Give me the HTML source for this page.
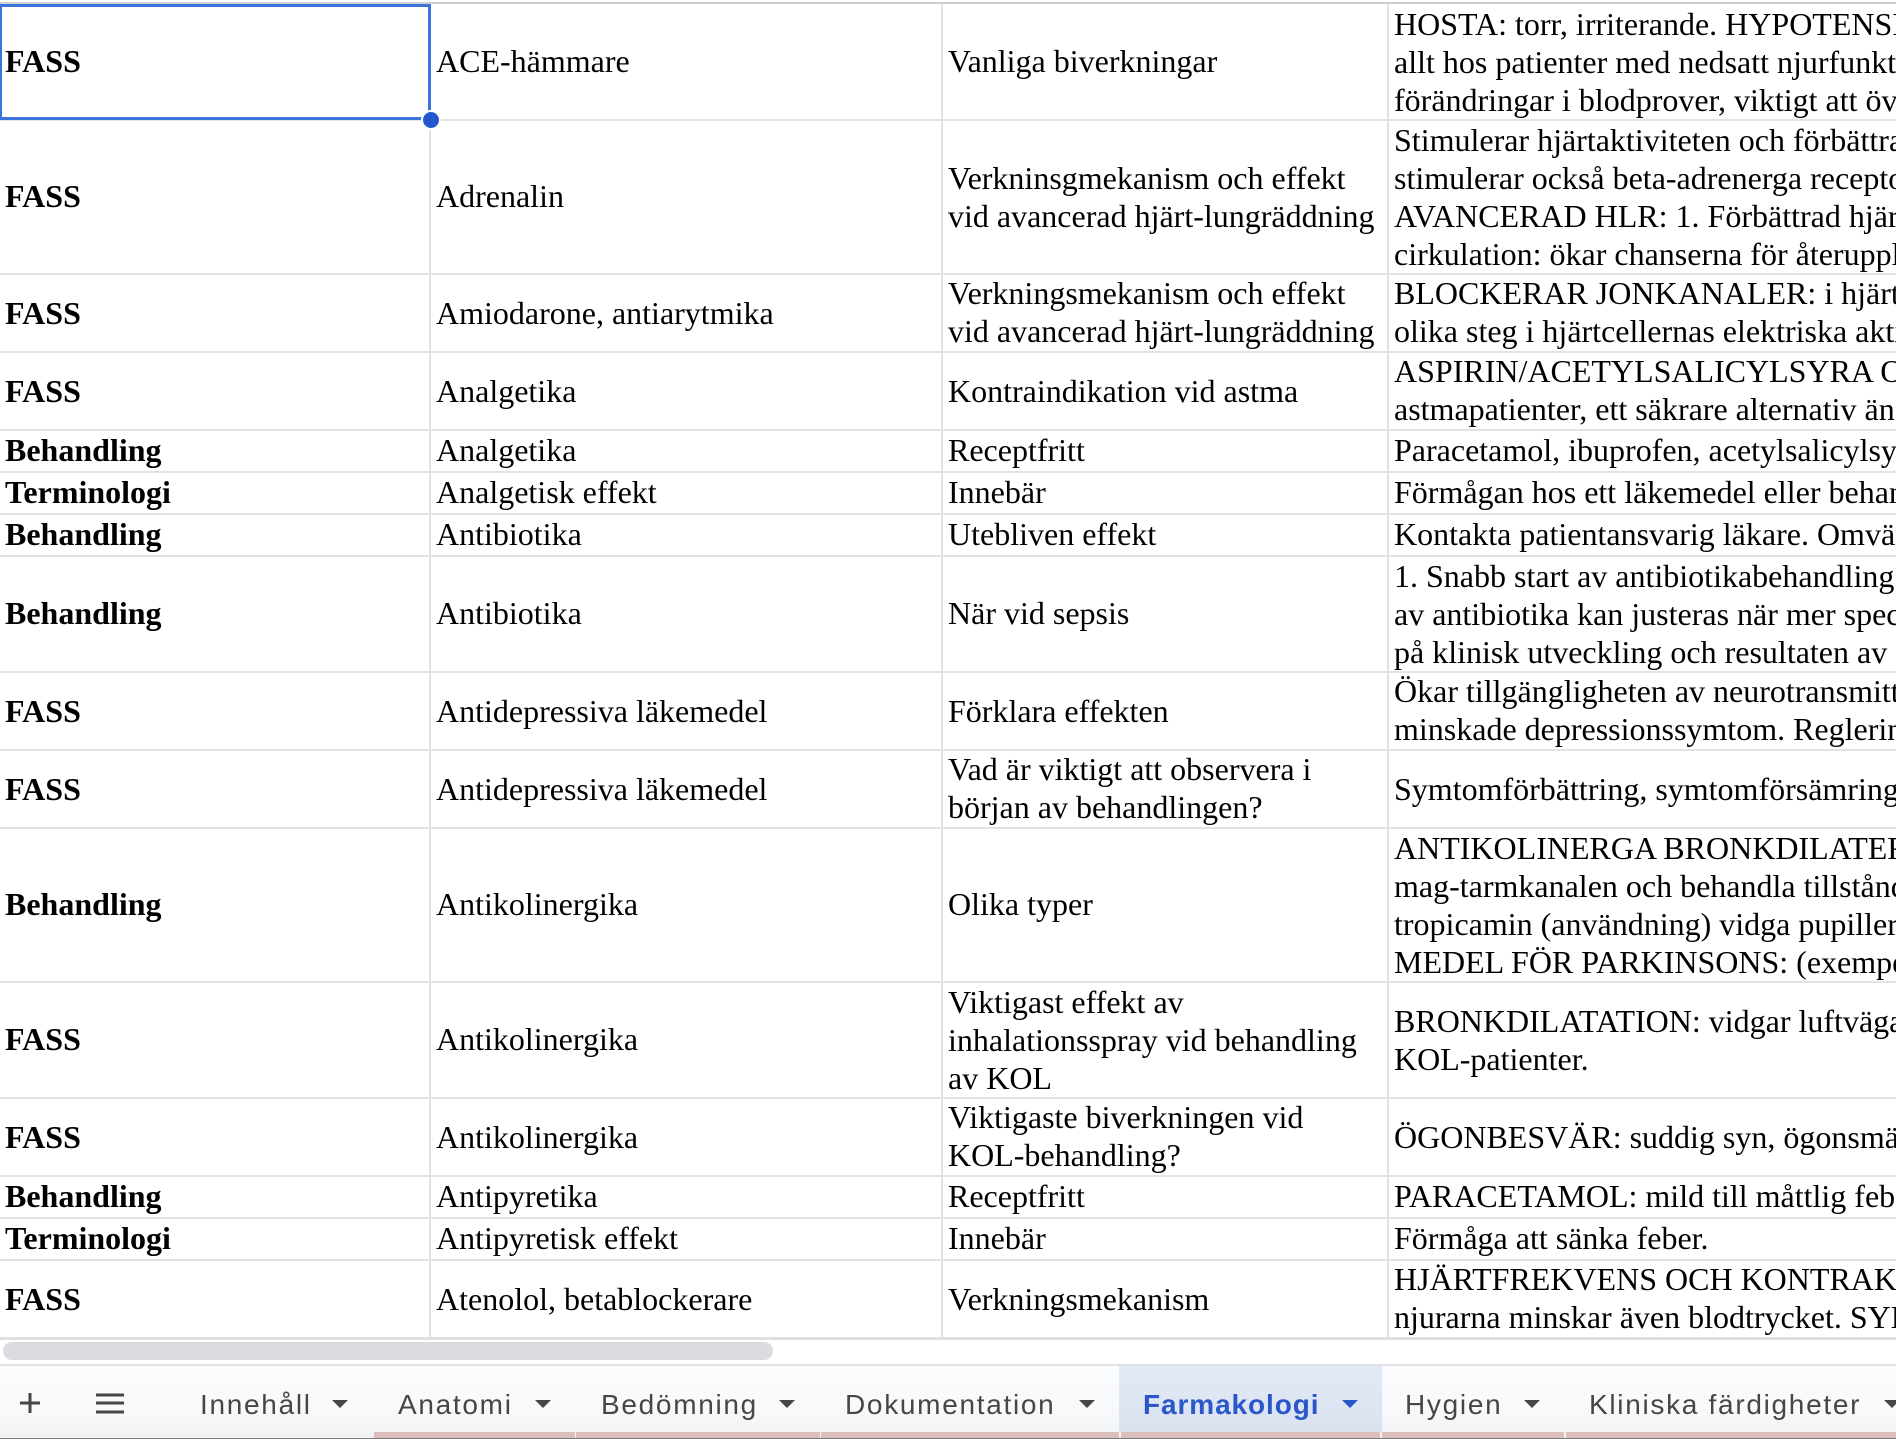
<!DOCTYPE html>
<html lang="sv">
<head>
<meta charset="utf-8">
<title>Farmakologi</title>
<style>
html,body{margin:0;padding:0;width:1896px;height:1439px;overflow:hidden;background:#fff}
#s{position:absolute;left:0;top:0;width:1896px;height:1439px;overflow:hidden;background:#fff}
.r{position:absolute;left:0;width:1896px;border-bottom:2px solid #e2e3e3;box-sizing:content-box}
.c{position:absolute;top:0;bottom:0;display:flex;align-items:center;font:32px/38px "Liberation Serif",serif;color:#000;white-space:nowrap;overflow:hidden;padding-bottom:2px}
.c>div{position:relative;top:1px}
.m .c{padding-bottom:0;padding-top:0}
.m .c>div{position:relative;top:-1px}
.a{left:5px;width:424px;font-weight:bold}
.b{left:429px;width:512px;padding-left:5px;box-sizing:border-box;border-left:2px solid #e2e3e3}
.d{left:941px;width:446px;padding-left:5px;box-sizing:border-box;border-left:2px solid #e2e3e3}
.e{left:1387px;width:509px;padding-left:5px;box-sizing:border-box;border-left:2px solid #e2e3e3}
.t{position:absolute;top:1389px;font:28px/32px "Liberation Sans",sans-serif;color:#444746;letter-spacing:1.7px;white-space:nowrap}
.ar{position:absolute;top:1400px;width:0;height:0;border-left:8px solid transparent;border-right:8px solid transparent;border-top:8px solid #444746}
.p{position:absolute;top:1432px;height:6px;background:#dcbfbd}
</style>
</head>
<body>
<div id="s">
<div style="position:absolute;left:0;top:2px;width:1896px;height:2px;background:#cfcfcf"></div>

<div class="r" style="top:4px;height:115px"><div class="c a">FASS</div><div class="c b">ACE-hämmare</div><div class="c d">Vanliga biverkningar</div><div class="c e"><div>HOSTA: torr, irriterande. HYPOTENSION<br>allt hos patienter med nedsatt njurfunktion<br>förändringar i blodprover, viktigt att övervaka</div></div></div>
<div class="r" style="top:121px;height:152px"><div class="c a">FASS</div><div class="c b">Adrenalin</div><div class="c d"><div>Verkninsgmekanism och effekt<br>vid avancerad hjärt-lungräddning</div></div><div class="c e"><div>Stimulerar hjärtaktiviteten och förbättrar<br>stimulerar också beta-adrenerga receptorer<br>AVANCERAD HLR: 1. Förbättrad hjärt<br>cirkulation: ökar chanserna för återupplivning</div></div></div>
<div class="r m" style="top:275px;height:76px"><div class="c a">FASS</div><div class="c b">Amiodarone, antiarytmika</div><div class="c d"><div>Verkningsmekanism och effekt<br>vid avancerad hjärt-lungräddning</div></div><div class="c e"><div>BLOCKERAR JONKANALER: i hjärtat<br>olika steg i hjärtcellernas elektriska aktivitet</div></div></div>
<div class="r m" style="top:353px;height:76px"><div class="c a">FASS</div><div class="c b">Analgetika</div><div class="c d">Kontraindikation vid astma</div><div class="c e"><div>ASPIRIN/ACETYLSALICYLSYRA OCH<br>astmapatienter, ett säkrare alternativ än</div></div></div>
<div class="r" style="top:431px;height:40px"><div class="c a">Behandling</div><div class="c b">Analgetika</div><div class="c d">Receptfritt</div><div class="c e">Paracetamol, ibuprofen, acetylsalicylsyra</div></div>
<div class="r" style="top:473px;height:40px"><div class="c a">Terminologi</div><div class="c b">Analgetisk effekt</div><div class="c d">Innebär</div><div class="c e">Förmågan hos ett läkemedel eller behandling</div></div>
<div class="r" style="top:515px;height:40px"><div class="c a">Behandling</div><div class="c b">Antibiotika</div><div class="c d">Utebliven effekt</div><div class="c e">Kontakta patientansvarig läkare. Omvärdera</div></div>
<div class="r" style="top:557px;height:114px"><div class="c a">Behandling</div><div class="c b">Antibiotika</div><div class="c d">När vid sepsis</div><div class="c e"><div>1. Snabb start av antibiotikabehandling inom<br>av antibiotika kan justeras när mer specifik<br>på klinisk utveckling och resultaten av odling</div></div></div>
<div class="r m" style="top:673px;height:76px"><div class="c a">FASS</div><div class="c b">Antidepressiva läkemedel</div><div class="c d">Förklara effekten</div><div class="c e"><div>Ökar tillgängligheten av neurotransmittorer<br>minskade depressionssymtom. Reglering</div></div></div>
<div class="r m" style="top:751px;height:76px"><div class="c a">FASS</div><div class="c b">Antidepressiva läkemedel</div><div class="c d"><div>Vad är viktigt att observera i<br>början av behandlingen?</div></div><div class="c e">Symtomförbättring, symtomförsämring och</div></div>
<div class="r" style="top:829px;height:152px"><div class="c a">Behandling</div><div class="c b">Antikolinergika</div><div class="c d">Olika typer</div><div class="c e"><div>ANTIKOLINERGA BRONKDILATERARE<br>mag-tarmkanalen och behandla tillstånd<br>tropicamin (användning) vidga pupillerna<br>MEDEL FÖR PARKINSONS: (exempel</div></div></div>
<div class="r" style="top:983px;height:114px"><div class="c a">FASS</div><div class="c b">Antikolinergika</div><div class="c d"><div>Viktigast effekt av<br>inhalationsspray vid behandling<br>av KOL</div></div><div class="c e"><div>BRONKDILATATION: vidgar luftvägarna<br>KOL-patienter.</div></div></div>
<div class="r m" style="top:1099px;height:76px"><div class="c a">FASS</div><div class="c b">Antikolinergika</div><div class="c d"><div>Viktigaste biverkningen vid<br>KOL-behandling?</div></div><div class="c e">ÖGONBESVÄR: suddig syn, ögonsmärta</div></div>
<div class="r" style="top:1177px;height:40px"><div class="c a">Behandling</div><div class="c b">Antipyretika</div><div class="c d">Receptfritt</div><div class="c e">PARACETAMOL: mild till måttlig feber</div></div>
<div class="r" style="top:1219px;height:40px"><div class="c a">Terminologi</div><div class="c b">Antipyretisk effekt</div><div class="c d">Innebär</div><div class="c e">Förmåga att sänka feber.</div></div>
<div class="r m" style="top:1261px;height:76px;border-bottom:none"><div class="c a">FASS</div><div class="c b">Atenolol, betablockerare</div><div class="c d">Verkningsmekanism</div><div class="c e"><div>HJÄRTFREKVENS OCH KONTRAKTION<br>njurarna minskar även blodtrycket. SYMTOM</div></div></div>

<!-- selection -->
<div style="position:absolute;left:-1px;top:4px;width:432px;height:116px;box-sizing:border-box;border:3px solid #3b74dc"></div>
<div style="position:absolute;left:421px;top:110px;width:20px;height:20px;box-sizing:border-box;border-radius:50%;background:#2458cf;border:2px solid #fff"></div>

<!-- scrollbar -->
<div style="position:absolute;left:0;top:1337px;width:1896px;height:3px;background:#e0e0e0"></div>
<div style="position:absolute;left:3px;top:1342px;width:770px;height:18px;border-radius:9px;background:#dadce0"></div>
<div style="position:absolute;left:0;top:1364px;width:1896px;height:2px;background:#e0e3e5"></div>

<!-- tab bar -->
<div style="position:absolute;left:0;top:1366px;width:1896px;height:72px;background:linear-gradient(#fbfcfe,#f8f9fb 60%,#f0f2f4)"></div>
<div style="position:absolute;left:0;top:1438px;width:1896px;height:1px;background:#7d7d7d"></div>
<div style="position:absolute;left:1119px;top:1366px;width:263px;height:66px;background:linear-gradient(#e2e9f6,#dae2f0)"></div>

<div class="p" style="left:374px;width:201px"></div>
<div class="p" style="left:576px;width:244px"></div>
<div class="p" style="left:821px;width:298px"></div>
<div class="p" style="left:1121px;width:259px"></div>
<div class="p" style="left:1382px;width:182px"></div>
<div class="p" style="left:1566px;width:330px"></div>

<!-- plus & menu -->
<svg style="position:absolute;left:0;top:1366px" width="140" height="66" viewBox="0 0 140 66">
<path d="M30 27V47M20 37H40" stroke="#444746" stroke-width="3" fill="none"/>
<path d="M96 29H124M96 37H124M96 46H124" stroke="#444746" stroke-width="3" fill="none"/>
</svg>

<div class="t" style="left:200px">Innehåll</div><div class="ar" style="left:332px"></div>
<div class="t" style="left:398px">Anatomi</div><div class="ar" style="left:535px"></div>
<div class="t" style="left:601px">Bedömning</div><div class="ar" style="left:779px"></div>
<div class="t" style="left:845px">Dokumentation</div><div class="ar" style="left:1079px"></div>
<div class="t" style="left:1143px;color:#2a57c9;font-weight:bold;letter-spacing:.9px">Farmakologi</div><div class="ar" style="left:1342px;border-top-color:#2a57c9"></div>
<div class="t" style="left:1405px">Hygien</div><div class="ar" style="left:1524px"></div>
<div class="t" style="left:1589px">Kliniska färdigheter</div><div class="ar" style="left:1884px"></div>
</div>
</body>
</html>
